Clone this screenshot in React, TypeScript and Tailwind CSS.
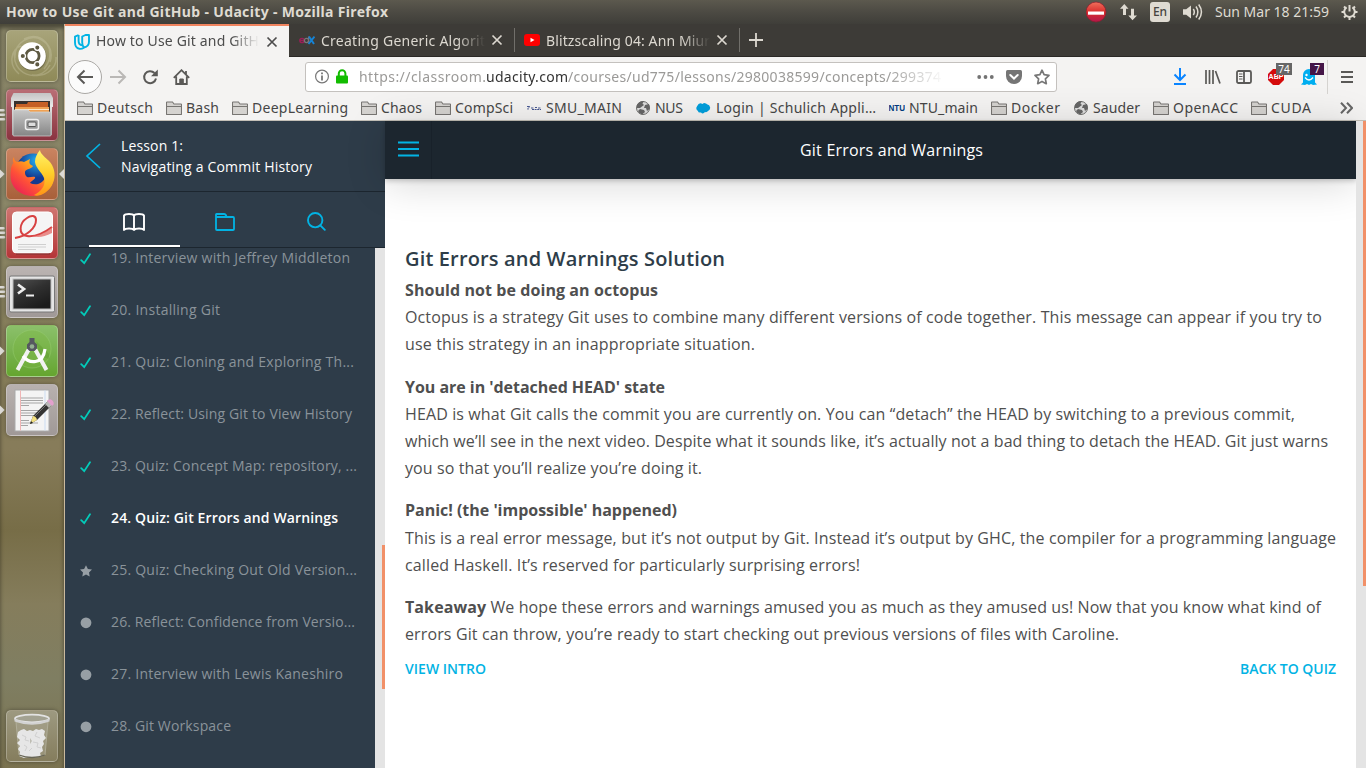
import { useLayoutEffect, useRef, useState } from "react";
import type { ReactNode } from "react";

const UI = "font-['Noto_Sans','Open_Sans',sans-serif]";

/* Single line of text whose tracking is adjusted so that it spans `w` pixels. */
function Fit({ w, className = "", children }: { w: number; className?: string; children: ReactNode }) {
  const ref = useRef<HTMLSpanElement>(null);
  const [ls, setLs] = useState(0);
  useLayoutEffect(() => {
    const el = ref.current;
    if (!el) return;
    el.style.letterSpacing = "0px";
    const natural = el.getBoundingClientRect().width;
    const n = Math.max(1, (el.textContent || "").length - 1);
    const next = (w - natural) / n;
    el.style.letterSpacing = `${next}px`;
    setLs(next);
  }, [w]);
  return (
    <span className={`block shrink-0 whitespace-pre ${className}`} style={{ width: w }}>
      <span ref={ref} className="inline-block" style={{ letterSpacing: ls }}>
        {children}
      </span>
    </span>
  );
}

function TopPanel() {
  return (
    <header className="flex h-6 shrink-0 items-center bg-linear-to-b from-[#5c594e] via-[#4c4a43] to-[#3f3e39] pl-1.5 pr-2 text-[#dfdbd2]">
      <Fit w={382} className="text-[14px] font-bold leading-6">How to Use Git and GitHub - Udacity - Mozilla Firefox</Fit>
      <div className="ml-auto flex items-center">
        <svg width="22" height="22" viewBox="0 0 22 22">
          <defs>
            <linearGradient id="stop" x2="0" y2="1"><stop stopColor="#f0705c" /><stop offset=".5" stopColor="#d92d2d" /><stop offset="1" stopColor="#b3164b" /></linearGradient>
          </defs>
          <circle cx="10" cy="11" r="10" fill="url(#stop)" stroke="#8f1d2e" strokeWidth=".7" />
          <rect x="2" y="10.500" width="16" height="3.200" fill="#fff" />
        </svg>
        <svg className="ml-3" width="18" height="18" viewBox="0 0 18 18" fill="#dfdbd2">
          <path d="M4.300 1 8.500 5.700H6V12H3V5.700H0zM12.500 17.300 8.300 12.600h2.700V5.800h3v6.800h3z" />
        </svg>
        <div className="ml-3 flex h-5 w-5 items-center justify-center rounded-[3px] bg-[#dfdbd2] text-[12px] font-medium text-[#46443f]">En</div>
        <svg className="ml-3" width="21" height="18" viewBox="0 0 21 18" fill="none" stroke="#dfdbd2" strokeWidth="1.500">
          <path d="M1 6.300h3.200L9 2.500v13L4.200 11.700H1z" fill="#dfdbd2" stroke="none" />
          <path d="M11.300 6q2 3 0 6M14 3.500q3.700 5.500 0 11M16.700 1.500q5.500 7.500 0 15" />
        </svg>
        <Fit w={114} className="ml-3 text-[14px] leading-6">Sun Mar 18 21:59</Fit>
        <svg className="ml-3" width="17" height="18" viewBox="0 0 17 18" fill="none" stroke="#dfdbd2">
          <path d="M5.600 4.300a5.300 5.300 0 1 0 5.800 0" strokeWidth="2" />
          <path d="M8.500 2v6.500" strokeWidth="2" />
          <path d="M.5 9h2.500M14 9h2.500M3 3.500l1.800 1.800M14 3.500l-1.800 1.800M3 14.500l1.800-1.800M14 14.500l-1.800-1.800M8.500 14v3" strokeWidth="2" />
        </svg>
      </div>
    </header>
  );
}

function Tile({ className, children }: { className: string; children: ReactNode }) {
  return (
    <div className={`flex h-[52px] w-[52px] shrink-0 items-center justify-center rounded-[5px] border border-white/25 shadow-[0_0_4px_rgba(0,0,0,0.35)] ${className}`}>
      {children}
    </div>
  );
}

function Pips({ kind }: { kind: "none" | "bars" | "arrow" }) {
  return (
    <svg className="shrink-0" width="6" height="14" viewBox="0 0 6 14" fill="#dcdad6">
      {kind === "bars" && <path d="M0 1h3.500a1 1 0 0 1 0 2.500H0zM0 5.500h4a1 1 0 0 1 0 2.500H0zM0 10h4a1 1 0 0 1 0 2.500H0z" />}
      {kind === "arrow" && <path d="M0 2.500 4.700 7 0 11.500z" />}
    </svg>
  );
}

function DockRow({ kind = "none", active = false, children }: { kind?: "none" | "bars" | "arrow"; active?: boolean; children: ReactNode }) {
  return (
    <div className="flex h-[52px] items-center">
      <Pips kind={kind} />
      {children}
      {active && (
        <svg className="ml-px shrink-0" width="5" height="10" viewBox="0 0 5 10"><path d="M5 0v10L0 5z" fill="#dcdad6" /></svg>
      )}
    </div>
  );
}

function Dock() {
  return (
    <aside className="flex w-[65px] shrink-0 flex-col gap-[7px] border-r border-[#c9b99e] bg-[linear-gradient(#878366_0%,#8b8768_25%,#857c58_45%,#877c5a_57%,#776d47_68%,#857d5c_78%,#7f7e62_88%,#7b7350_100%)] pt-1.5 shadow-[inset_0_4px_4px_rgba(0,0,0,0.45)]">
      <DockRow>
        <Tile className="bg-linear-to-b from-[#a8a47a] to-[#8f8a58]">
          <svg width="50" height="50" viewBox="0 0 50 50" fill="none">
            <path d="M8 27C7 11 24 2 35 9s10 16 8 22M17 8C36-2 52 20 37 38M8 20C3 43 32 54 43 34M12 43C0 33 5 17 14 15M25 44c16 3 25-9 24-18" stroke="#d8d4b6" strokeOpacity=".3" strokeWidth="1.500" />
            <circle cx="25.500" cy="26" r="14" fill="#55523a" fillOpacity=".5" />
            <circle cx="25" cy="25" r="13.800" fill="#fff" />
            <circle cx="25.500" cy="25" r="6.600" stroke="#5d5942" strokeWidth="2.800" />
            <g fill="#5d5942" stroke="#fff" strokeWidth="1.300"><circle cx="15.800" cy="25" r="2.700" /><circle cx="30.300" cy="16.600" r="2.700" /><circle cx="30.300" cy="33.400" r="2.700" /></g>
            <path d="m15 25h4M30.300 16.600l-1.500 2.500M30.300 33.400l-1.500-2.500" stroke="none" />
          </svg>
        </Tile>
      </DockRow>
      <DockRow kind="bars">
        <Tile className="bg-linear-to-b from-[#b96e75] to-[#8a3340]">
          <svg width="50" height="50" viewBox="0 0 50 50">
            <defs>
              <linearGradient id="cab" x2="0" y2="1"><stop stopColor="#c4c4c4" /><stop offset=".3" stopColor="#e8e8e8" /><stop offset="1" stopColor="#989898" /></linearGradient>
              <linearGradient id="cab2" x2="0" y2="1"><stop stopColor="#c7c7c7" /><stop offset="1" stopColor="#858585" /></linearGradient>
            </defs>
            <path d="M6 4q0-1 1-1h36q1 0 1 1l2 4v9h-1v28H5V17H4V8z" fill="url(#cab)" />
            <path d="M7 11h36v12H7z" fill="#37312e" />
            <path d="M9 14h11l1-2h20v9H9z" fill="#c66026" /><path d="M8 17h34v5H8z" fill="#efa153" /><path d="M8 19h34v1H8z" fill="#fce7c8" />
            <path d="M6 20h15l2 2h21v23q0 1-1 1H7q-1 0-1-1z" fill="url(#cab2)" stroke="#d5d5d5" strokeWidth=".7" />
            <rect x="18.500" y="29.500" width="13" height="10" rx="2" fill="#999" stroke="#eee" strokeWidth="1.500" />
            <rect x="21" y="32" width="8" height="4.500" rx="1" fill="#ddd" stroke="#555" />
          </svg>
        </Tile>
      </DockRow>
      <DockRow kind="arrow" active>
        <Tile className="bg-linear-to-b from-[#ca8360] to-[#a8603a]">
          <svg width="50" height="50" viewBox="0 0 50 50">
            <defs>
              <linearGradient id="fx" x1="1" y1="0" x2="0.100" y2="1"><stop stopColor="#ffe640" /><stop offset=".38" stopColor="#ffa31b" /><stop offset=".65" stopColor="#ff5237" /><stop offset="1" stopColor="#e5185c" /></linearGradient>
              <radialGradient id="globe" cx=".6" cy=".2"><stop stopColor="#21aef0" /><stop offset="1" stopColor="#153a90" /></radialGradient>
              <linearGradient id="tail" x2="0" y2="1"><stop stopColor="#fff36b" /><stop offset=".5" stopColor="#ffd02b" /><stop offset="1" stopColor="#ff9417" /></linearGradient>
            </defs>
            <circle cx="26" cy="22" r="17.500" fill="url(#globe)" />
            <path d="M7 8c0 3 1 4 3 5 3-1 5-1 7 0l6-3c-1 4-1 5 3 7-1 3-8 3-8 6 0 2 0 3 2 5 3 1 5-1 8 0 1 2-4 4-5 6 6 3 14 1 16-8 1-8 0-13-4-17 6 2 11 8 12 17 0 12-9 21-21 21C13 47 3.500 38 3.500 27c0-8 1-11 3-13-1-2-1-4 .5-6z" fill="url(#fx)" />
            <path d="M33 1c0 5 9 9 12 15 6 11 1 24-9 29-4 2-7 2-9 1 8-4 12-10 10-17-2-6-8-9-9-16 0-5 2-8 5-12z" fill="url(#tail)" />
          </svg>
        </Tile>
      </DockRow>
      <DockRow kind="bars">
        <Tile className="bg-linear-to-b from-[#cf7470] to-[#b43538]">
          <svg width="50" height="50" viewBox="0 0 50 50" fill="none">
            <rect x="5.500" y="4" width="40" height="41" rx="4" fill="#f5f5f5" stroke="#fff" />
            <path d="M9 46h34" stroke="#7f3030" strokeWidth="1" />
            <path d="M8 30C20 28 29 20 29 12c0-5-5-5-9-2-8 5-9 17 0 18 8 1 17-3 25-9" stroke="#d84242" strokeWidth="2" />
            <path d="M25 28c8 0 15-4 20-9v6c-8 4-14 5-20 3z" fill="#e46a65" fillOpacity=".75" />
            <path d="M11 36.500h28M11 39h28M11 41.500h18" stroke="#cfcfcf" />
          </svg>
        </Tile>
      </DockRow>
      <DockRow kind="bars">
        <Tile className="bg-linear-to-b from-[#bbb4b2] to-[#a09997]">
          <svg width="50" height="50" viewBox="0 0 50 50">
            <defs><linearGradient id="term" x2=".6" y2="1"><stop stopColor="#505050" /><stop offset=".5" stopColor="#303030" /><stop offset="1" stopColor="#1c1c1c" /></linearGradient></defs>
            <rect x="2.500" y="9" width="45" height="36" rx="1.500" fill="#e5e5e5" stroke="#777" />
            <rect x="6" y="12" width="38" height="30" fill="url(#term)" stroke="#bcbcbc" />
            <path d="m11 17.500 6 4.500-6 4.500" fill="none" stroke="#eee" strokeWidth="2.700" /><path d="M19 28.500h8" stroke="#eee" strokeWidth="2" />
          </svg>
        </Tile>
      </DockRow>
      <DockRow kind="arrow">
        <Tile className="bg-linear-to-b from-[#8bc06a] to-[#65a52e]">
          <svg width="50" height="50" viewBox="0 0 50 50" fill="none">
            <circle cx="25" cy="23" r="19" stroke="#9ed277" strokeOpacity=".4" fill="#7ab740" fillOpacity=".4" />
            <path d="M29 15 42 28v5L33 30z" fill="#4e8f25" fillOpacity=".3" />
            <path d="M22 23 10.500 44M28 23l11.500 21" stroke="#f1f1f1" strokeWidth="4" />
            <path d="M16 30c6 8 20 9 22-7" stroke="#fff" strokeWidth="3.200" />
            <path d="M22.500 12h5v4l2.500 2.500v4l-2.500 2.500h-5L20 22.500v-4l2.500-2.500z" fill="#55585f" /><circle cx="25" cy="20.500" r="2.300" fill="#94ae92" />
          </svg>
        </Tile>
      </DockRow>
      <DockRow kind="arrow">
        <Tile className="bg-linear-to-b from-[#b8b1af] to-[#a09997]">
          <svg width="50" height="50" viewBox="0 0 50 50" fill="none">
            <rect x="8" y="5" width="34" height="41" fill="#f4f4f4" stroke="#aaa" />
            <path d="M13.500 5.500v40" stroke="#f0b5b5" /><path d="M38 5.500v40" stroke="#cbdcf2" />
            <path d="M14 13h22M14 15.500h22M14 18h22M14 20.500h8M14 25.500h20M14 28h18M14 30.500h15M14 35.500h8M14 38h17M14 40.500h7" stroke="#a5a5a5" />
            <path d="m23 39 3-8 15-15 4 4-15 15z" fill="#333" /><path d="m23 39 3-8q3 0 4 4z" fill="#f2df80" />
            <path d="m23 39 1-3 2 2z" fill="#222" /><path d="m38 19 3-3 4 4-3 3z" fill="#b9b9b9" /><path d="m41 16 2-1q3 1 3 4l-1 1z" fill="#e3a0cd" stroke="#e3a0cd" strokeWidth="1.500" />
            <path d="m28 31 11-11" stroke="#777" />
          </svg>
        </Tile>
      </DockRow>
      <div className="mt-auto pb-1.5">
        <DockRow>
          <Tile className="bg-linear-to-b from-[#9d9980] to-[#857d5d]">
            <svg width="50" height="50" viewBox="0 0 50 50">
              <path d="m9 11 3 33q13 5 26 0l3-33z" fill="#b5b3a0" fillOpacity=".35" stroke="#b9b7a5" strokeWidth=".7" />
              <path d="m11 21 3-2 3-1 3 2 3-1 3 1 3-2 3 1 3-1 3 2-1 4 2 3-3 3 1 3-2 3 1 4-3 2 1 3-5 1-4 1-4-1-4 1-5-2 1-4-2-3 2-3-3-3 3-3-3-3z" fill="#e6e6e6" />
              <path d="m15 24 4 2-1 3 4 1M30 21l-2 4 5 2M26 31l5 1-1 4 4 1M17 34l3 2-2 4M22 40l3-3" fill="none" stroke="#d0d0d0" strokeWidth="1" />
              <path d="M23 27l2 3-2 3z" fill="#bebdb3" />
              <path d="M12 44q13 5 26 0" fill="none" stroke="#676555" strokeWidth="1.300" />
              <ellipse cx="25" cy="7.500" rx="17" ry="3.800" fill="#a3a292" stroke="#e3e3e3" strokeWidth="1.800" />
              <path d="M7.500 7.500q17.500 8 35 0v3q-17.500 6.500-35 0z" fill="#d2d2d2" />
            </svg>
          </Tile>
        </DockRow>
      </div>
    </aside>
  );
}

function Close({ className }: { className: string }) {
  return <svg className={`shrink-0 ${className}`} width="12" height="12" viewBox="0 0 12 12" fill="none" stroke="currentColor" strokeWidth="1.700"><path d="m1.500 1.500 9 9m0-9-9 9" /></svg>;
}

function TabBar() {
  const label = "text-[14px] leading-[31px] mask-r-from-83% mask-r-to-100%";
  return (
    <div className="flex h-[33px] shrink-0 bg-[#3d3b37] text-[#dcd8d0]">
      <div className="flex w-56 items-center border-t-2 border-[#f0845f] bg-[#f4f3f2] pl-[9px] text-[#4c4c4c]">
        <svg width="16" height="16" viewBox="0 0 16 16" fill="none" stroke="#02b3e4" strokeWidth="1.900" strokeLinejoin="round">
          <path d="M4.600 1 1 2.600v5.900q0 5.500 4.500 6.300 2.500.2 4.300-1" />
          <path d="M4.600 1v6q0 4 3.600 4.200" />
          <path d="M11.500 1 8.200 2.500v6q0 3.500 1.800 5 5-1 5-6V1z" />
        </svg>
        <Fit w={163} className={`ml-1.5 -mt-0.5 ${label}`}>How to Use Git and GitH</Fit>
        <Close className="ml-[7px]" />
      </div>
      <div className="flex w-[225px] items-center border-b border-[#2b2926] pl-2.5">
        <svg width="16" height="12" viewBox="0 0 16 12" fill="none">
          <circle cx="3" cy="6.500" r="2.100" stroke="#9a1e55" strokeWidth="1.500" /><path d="M1 6.500h4" stroke="#9a1e55" />
          <circle cx="7.500" cy="6.500" r="2.100" stroke="#77757a" strokeWidth="1.300" /><path d="M9.600 2.500v6" stroke="#77757a" strokeWidth="1.300" />
          <path d="m10 2.500 5 7.500M15.500 2.500 9.500 10" stroke="#1683d5" strokeWidth="2" />
        </svg>
        <Fit w={164} className={`ml-1.5 ${label}`}>Creating Generic Algorit</Fit>
        <Close className="ml-1.5" />
      </div>
      <div className="flex w-[226px] items-center border-b border-[#2b2926]">
        <div className="h-6 w-px bg-[#716f6a]" />
        <svg className="ml-[9px]" width="16" height="12" viewBox="0 0 16 12"><rect width="16" height="12" rx="3" fill="#f00" /><path d="M6.500 3.700v4.600l4-2.300z" fill="#fff" /></svg>
        <Fit w={164} className={`ml-1.5 ${label}`}>Blitzscaling 04: Ann Miur</Fit>
        <Close className="ml-1.5" />
        <div className="ml-auto h-6 w-px bg-[#716f6a]" />
      </div>
      <div className="flex flex-1 items-center border-b border-[#2b2926] pl-[8px]">
        <svg width="16" height="16" viewBox="0 0 16 16" stroke="#dcd8d0" strokeWidth="1.800"><path d="M8 1v14M1 8h14" /></svg>
      </div>
    </div>
  );
}

function Toolbar() {
  return (
    <div className="flex h-[39px] shrink-0 items-center bg-[#f4f3f2] pl-[3px] pr-3 text-[#5a5957]">
      <div className="flex h-[34px] w-[34px] shrink-0 items-center justify-center rounded-full border border-[#aaa8a5] bg-[#fbfbfb]">
        <svg width="18" height="16" viewBox="0 0 18 16" fill="none" stroke="currentColor" strokeWidth="2"><path d="M17 8H2.500M8.500 1.500 2 8l6.500 6.500" /></svg>
      </div>
      <svg className="ml-2 shrink-0" width="17" height="16" viewBox="0 0 17 16" fill="none" stroke="#bab8b6" strokeWidth="2"><path d="M0 8h14.500M8.500 1.500 15 8l-6.500 6.500" /></svg>
      <svg className="ml-[15px] shrink-0" width="16" height="16" viewBox="0 0 16 16" fill="none" stroke="currentColor" strokeWidth="2"><path d="M14 9.500A6 6 0 1 1 12.500 4" /><path d="M15.800.5v6.800H9z" fill="currentColor" stroke="none" /></svg>
      <svg className="ml-[15px] shrink-0" width="17" height="16" viewBox="0 0 17 16" fill="none" stroke="currentColor" strokeWidth="1.800"><path d="M.8 8.800 8.500 1.200l7.700 7.600M3.200 7.500V15h10.600V7.500M13 2v3" /><path d="M6.800 15v-5h3.500v5" fill="currentColor" strokeWidth="1" /></svg>
      <div className="ml-[115px] flex h-[30px] w-[752px] shrink-0 items-center rounded-[3px] border border-[#c4c1be] bg-white pl-[9px]">
        <svg width="15" height="15" viewBox="0 0 15 15" fill="none" stroke="#777" strokeWidth="1.200"><circle cx="7" cy="7.500" r="6.400" /><path d="M7 6.500v5M7 3.500v1.800" strokeWidth="1.800" /></svg>
        <svg className="ml-1.5" width="13" height="15" viewBox="0 0 13 15"><path d="M2.800 8V4.500a3.300 3.300 0 0 1 6.600 0V8" fill="none" stroke="#12bc00" strokeWidth="2" /><rect width="12" y="6.500" height="8" rx="1" fill="#12bc00" /></svg>
        <div className="ml-2.5 flex w-[586px] text-[14px] leading-7 text-[#9b9a98] mask-r-from-90% mask-r-to-100%">
          <Fit w={127}>https://classroom.</Fit>
          <Fit w={82} className="text-[#333]">udacity.com</Fit>
          <Fit w={373}>/courses/ud775/lessons/2980038599/concepts/299374</Fit>
        </div>
        <svg className="ml-[32px]" width="17" height="4" viewBox="0 0 17 4" fill="#737373"><circle cx="2.200" cy="2" r="1.900" /><circle cx="8.500" cy="2" r="1.900" /><circle cx="14.800" cy="2" r="1.900" /></svg>
        <svg className="ml-3 shrink-0" width="16" height="14" viewBox="0 0 16 14"><path d="M1.500 0h13Q16 0 16 1.500V6a8 8 0 0 1-16 0V1.500Q0 0 1.500 0z" fill="#757575" /><path d="m4.300 5 3.700 3.500L11.700 5" fill="none" stroke="#fff" strokeWidth="2" strokeLinecap="round" /></svg>
        <svg className="ml-3 shrink-0" width="16" height="16" viewBox="0 0 16 16" fill="none" stroke="#777" strokeWidth="1.700" strokeLinejoin="round"><path d="m8 1.200 2.100 4.500 4.900.7-3.600 3.400.9 4.900L8 12.400l-4.300 2.300.9-4.900L1 6.400l4.900-.7z" /></svg>
      </div>
      <svg className="ml-[116px] shrink-0" width="14" height="17" viewBox="0 0 14 17" fill="none" stroke="#0a84ff" strokeWidth="2"><path d="M7 0v11.500M1.500 6.500 7 12l5.500-5.500M1 16h12" /></svg>
      <svg className="ml-[18px] shrink-0" width="16" height="14" viewBox="0 0 16 14" stroke="#5a5957" strokeWidth="1.700"><path d="M1 0v14M4.500 0v14M8 0v14M10.500 1l4.500 12.500" /></svg>
      <svg className="ml-[15px] shrink-0" width="16" height="14" viewBox="0 0 16 14" fill="none" stroke="#5a5957" strokeWidth="1.800"><rect x="1" y="1" width="14" height="12" rx="1.500" /><path d="M8 1v12" /><path d="M3 4h3.500M3 6.500h3.500M3 9h3.500" strokeWidth="1" /></svg>
      <div className="relative ml-4 h-4 w-4 shrink-0">
        <svg width="16" height="16" viewBox="0 0 16 16"><path d="M5 0h6l5 5v6l-5 5H5l-5-5V5z" fill="#d50b0b" /></svg>
        <span className="absolute left-0 top-[3px] w-4 text-center font-['Liberation_Sans',sans-serif] text-[7px] font-bold leading-[10px] text-white">ABP</span>
        <span className="absolute -top-1.5 left-2 h-3 w-4 bg-[#666] text-center text-[10px] leading-3 text-white">74</span>
      </div>
      <div className="relative ml-[17px] h-4 w-4 shrink-0">
        <svg width="16" height="17" viewBox="0 0 16 17"><path d="M2 13.500V6a6 6 0 0 1 12 0v7.500l2 2-4 .5-2-1-2 1-2-1-2 1-4-.5z" fill="#00aef0" /><circle cx="5.500" cy="6" r="1.200" fill="#fff" /><path d="M4 8.500q4 5 8 0" fill="none" stroke="#fff" strokeWidth="1.300" /></svg>
        <span className="absolute -top-1.5 left-[9px] h-3 w-[14px] bg-[#451648] text-center text-[10px] leading-3 text-white">7</span>
      </div>
      <div className="ml-auto h-[34px] w-px bg-[#d5d3d0]" />
      <svg className="ml-[13px] shrink-0" width="13" height="12" viewBox="0 0 13 12" stroke="#5a5957" strokeWidth="2"><path d="M0 1h12M0 6h12M0 11h12" /></svg>
    </div>
  );
}

type Mark = { label: string; w: number; kind: "folder" | "globe" | "smu" | "cloud" | "ntu" };
const marks: Mark[] = [
  { label: "Deutsch", w: 56, kind: "folder" },
  { label: "Bash", w: 33, kind: "folder" },
  { label: "DeepLearning", w: 96, kind: "folder" },
  { label: "Chaos", w: 41, kind: "folder" },
  { label: "CompSci", w: 58, kind: "folder" },
  { label: "SMU_MAIN", w: 76, kind: "smu" },
  { label: "NUS", w: 28, kind: "globe" },
  { label: "Login | Schulich Appli…", w: 160, kind: "cloud" },
  { label: "NTU_main", w: 69, kind: "ntu" },
  { label: "Docker", w: 49, kind: "folder" },
  { label: "Sauder", w: 47, kind: "globe" },
  { label: "OpenACC", w: 65, kind: "folder" },
  { label: "CUDA", w: 40, kind: "folder" },
];

function MarkIcon({ kind }: { kind: Mark["kind"] }) {
  return (
    <svg className="shrink-0" width="16" height="16" viewBox="0 0 16 16" fill="none">
      {kind === "folder" && <path d="M.5 14V2.500q0-.5.500-.5h5.500l1.500 2h7q.5 0 .5.500V14q0 .5-.5.500H1q-.5 0-.5-.5zM.5 6.500h15" fill="#d5d3d0" stroke="#777572" strokeWidth="1.100" />}
      {kind === "globe" && (<><circle cx="8" cy="8" r="6.500" fill="#ddd" stroke="#70706e" strokeWidth="1" /><path d="M2 5q2-4 7-4L7.500 3.500 9 5 5 8H2zM10 5l4-1q1 3 .5 5L12 11l-1-3H9zM5 9l4 1 1 2-3 2.500Q4 14 3 11z" fill="#666" /></>)}
      {kind === "smu" && <path d="M1 6.500h3L2 8v2M5 8h3M9 7.500h2M12 8h3M6 9.500h9" stroke="#1b2e78" strokeWidth=".8" strokeDasharray="2 .6" />}
      {kind === "cloud" && <path d="M6.500 4A3 3 0 0 1 11 4.300a3.500 3.500 0 0 1 1 6.700q-1 1.500-3 1-2 2.500-4 .5-3 .5-3-1.500-3-2-.8-5Q3 2 6.500 4z" fill="#009edb" />}
      {kind === "ntu" && <text x="-.5" y="10.500" textLength="16.500" lengthAdjust="spacingAndGlyphs" fill="#003a80" className="font-['Liberation_Sans',sans-serif] text-[9px] font-bold">NTU</text>}
    </svg>
  );
}

function Bookmarks() {
  return (
    <div className="flex h-[25px] shrink-0 items-center gap-[13px] overflow-hidden border-b border-[#c4c0b8] bg-[#f4f3f2] pl-3 pr-[13px] text-[#464646]">
      {marks.map((m) => (
        <div key={m.label} className="flex shrink-0 items-center gap-1">
          <MarkIcon kind={m.kind} />
          <Fit w={m.w} className="text-[14px] leading-6">{m.label}</Fit>
        </div>
      ))}
      <svg className="ml-auto shrink-0" width="13" height="12" viewBox="0 0 13 12" fill="none" stroke="#666" strokeWidth="2"><path d="m1 .7 5 5.300-5 5.300M7 .7 12 6l-5 5.300" /></svg>
    </div>
  );
}

type LessonItem = { t: string; w: number; s: "done" | "star" | "dot"; on?: boolean };
const lessons: LessonItem[] = [
  { t: "19. Interview with Jeffrey Middleton", w: 239, s: "done" },
  { t: "20. Installing Git", w: 109, s: "done" },
  { t: "21. Quiz: Cloning and Exploring Th...", w: 243, s: "done" },
  { t: "22. Reflect: Using Git to View History", w: 241, s: "done" },
  { t: "23. Quiz: Concept Map: repository, ...", w: 246, s: "done" },
  { t: "24. Quiz: Git Errors and Warnings", w: 227, s: "done", on: true },
  { t: "25. Quiz: Checking Out Old Version...", w: 246, s: "star" },
  { t: "26. Reflect: Confidence from Versio...", w: 244, s: "dot" },
  { t: "27. Interview with Lewis Kaneshiro", w: 232, s: "dot" },
  { t: "28. Git Workspace", w: 120, s: "dot" },
];

function Sidebar() {
  return (
    <nav className="flex w-80 shrink-0 flex-col bg-[#2e3c49] text-white">
      <div className="flex h-[71px] shrink-0 items-center border-b border-[#1c262f] pl-5">
        <svg width="16" height="26" viewBox="0 0 16 26" fill="none" stroke="#02b3e4" strokeWidth="1.700"><path d="M15 1 2 13l13 12" /></svg>
        <div className="ml-5 text-[14px] leading-[21px]">
          <Fit w={62}>Lesson 1:</Fit>
          <Fit w={191}>Navigating a Commit History</Fit>
        </div>
      </div>
      <div className="flex h-14 shrink-0 border-b border-[#1c262f] px-6">
        <div className="flex w-[91px] items-center justify-center border-b-2 border-white pt-1.5">
          <svg width="22" height="18" viewBox="0 0 22 18" fill="none" stroke="#fff" strokeWidth="1.900" strokeLinejoin="round"><path d="M11 17V2.500Q10 1 6 1T1 2.500V17q1-1.500 5-1.500T11 17q1-1.500 5-1.500t5 1.500V2.500Q20 1 16 1t-5 1.500" /></svg>
        </div>
        <div className="flex w-[91px] items-center justify-center pt-1">
          <svg width="20" height="18" viewBox="0 0 20 18" fill="none" stroke="#02b3e4" strokeWidth="1.800" strokeLinejoin="round"><path d="M1 16V1.500Q1 1 1.500 1H9q2 0 2.500 3H18q1 0 1 1v11q0 1-1 1H2q-1 0-1-1zM1 4h11" /></svg>
        </div>
        <div className="flex w-[91px] items-center justify-center pl-0.5 pt-1">
          <svg width="19" height="19" viewBox="0 0 19 19" fill="none" stroke="#02b3e4" strokeWidth="1.900" strokeLinecap="round"><circle cx="8.200" cy="8.200" r="7.200" /><path d="m13.300 13.300 4.500 4.500" /></svg>
        </div>
      </div>
      <div className="flex min-h-0 flex-1">
        <div className="flex w-[310px] flex-col overflow-hidden">
          <div className="-mt-4 flex flex-col">
            {lessons.map((l) => (
              <div key={l.t} className="flex h-[52px] shrink-0 items-center pl-[15px]">
                <svg className="mt-0.5" width="12" height="12" viewBox="0 0 12 12" fill="none">
                  {l.s === "done" && <path d="m1.200 7.200 3 3L10 1.300" stroke="#02ccba" strokeWidth="1.800" strokeLinecap="round" />}
                  {l.s === "star" && <path d="m6 .2 1.900 3.700 4.100.6L9 7.400l.7 4.100L6 9.600l-3.700 1.900.7-4.100L0 4.500l4.100-.6z" fill="#979fa5" />}
                  {l.s === "dot" && <circle cx="6" cy="5.800" r="5.400" fill="#979fa5" />}
                </svg>
                <Fit w={l.w} className={l.on ? "ml-[19px] text-[14px] font-semibold leading-5 text-white" : "ml-[19px] text-[14px] leading-5 text-[#8a939a]"}>{l.t}</Fit>
              </div>
            ))}
          </div>
        </div>
        <div className="flex w-2.5 flex-col items-end bg-[#e4e4e4] pt-[297px]"><div className="h-36 w-[3px] bg-[#f19068]" /></div>
      </div>
    </nav>
  );
}

function Lesson() {
  return (
    <main className="flex min-w-0 flex-1 bg-white">
      <div className="flex min-w-0 flex-1 flex-col">
        <div className="flex h-[58px] shrink-0 items-center bg-[#1c262f] text-white shadow-[0_2px_5px_rgba(0,0,0,0.2),0_5px_40px_rgba(0,0,0,0.16)]">
          <div className="flex h-full w-[47px] items-center border-r border-[#18212a] pl-[13px]">
            <svg className="-mt-0.5" width="21" height="16" viewBox="0 0 21 16" stroke="#02b3e4" strokeWidth="2"><path d="M0 1.500h21M0 8h21M0 14.500h21" /></svg>
          </div>
          <div className="flex flex-1 justify-center pr-[5px]"><Fit w={183} className="text-[16px] leading-6">Git Errors and Warnings</Fit></div>
        </div>
        <article className="flex flex-col px-5 pt-[66px] text-[16px] leading-[27.2px] text-[#4f4f4f]">
          <h1 className="mb-[5px] text-[20px] font-semibold leading-[27px] text-[#2e3d49]"><Fit w={320}>Git Errors and Warnings Solution</Fit></h1>
          <section className="mb-[15px]">
            <h2 className="font-bold"><Fit w={253}>Should not be doing an octopus</Fit></h2>
            <Fit w={917}>Octopus is a strategy Git uses to combine many different versions of code together. This message can appear if you try to</Fit>
            <Fit w={350}>use this strategy in an inappropriate situation.</Fit>
          </section>
          <section className="mb-[15px]">
            <h2 className="font-bold"><Fit w={260}>You are in 'detached HEAD' state</Fit></h2>
            <Fit w={890}>HEAD is what Git calls the commit you are currently on. You can “detach” the HEAD by switching to a previous commit,</Fit>
            <Fit w={923}>which we’ll see in the next video. Despite what it sounds like, it’s actually not a bad thing to detach the HEAD. Git just warns</Fit>
            <Fit w={297}>you so that you’ll realize you’re doing it.</Fit>
          </section>
          <section className="mb-[15px]">
            <h2 className="font-bold"><Fit w={272}>Panic! (the 'impossible' happened)</Fit></h2>
            <Fit w={931}>This is a real error message, but it’s not output by Git. Instead it’s output by GHC, the compiler for a programming language</Fit>
            <Fit w={455}>called Haskell. It’s reserved for particularly surprising errors!</Fit>
          </section>
          <section>
            <Fit w={916}><strong>Takeaway</strong> We hope these errors and warnings amused you as much as they amused us! Now that you know what kind of</Fit>
            <Fit w={714}>errors Git can throw, you’re ready to start checking out previous versions of files with Caroline.</Fit>
          </section>
          <div className="mt-[11px] flex justify-between text-[14px] font-semibold leading-5 text-[#02b3e4]">
            <Fit w={81}>VIEW INTRO</Fit>
            <Fit w={96}>BACK TO QUIZ</Fit>
          </div>
        </article>
      </div>
      <div className="flex w-2.5 shrink-0 flex-col items-end bg-[#e4e4e4]"><div className="h-[465px] w-[3px] bg-[#f19068]" /></div>
    </main>
  );
}

export default function App() {
  return (
    <div className={`flex h-[768px] w-[1366px] flex-col overflow-hidden ${UI}`}>
      <TopPanel />
      <div className="flex min-h-0 flex-1">
        <Dock />
        <div className="flex min-w-0 flex-1 flex-col">
          <TabBar />
          <Toolbar />
          <Bookmarks />
          <div className="flex min-h-0 flex-1 font-['Open_Sans',sans-serif]">
            <Sidebar />
            <Lesson />
          </div>
        </div>
      </div>
    </div>
  );
}
